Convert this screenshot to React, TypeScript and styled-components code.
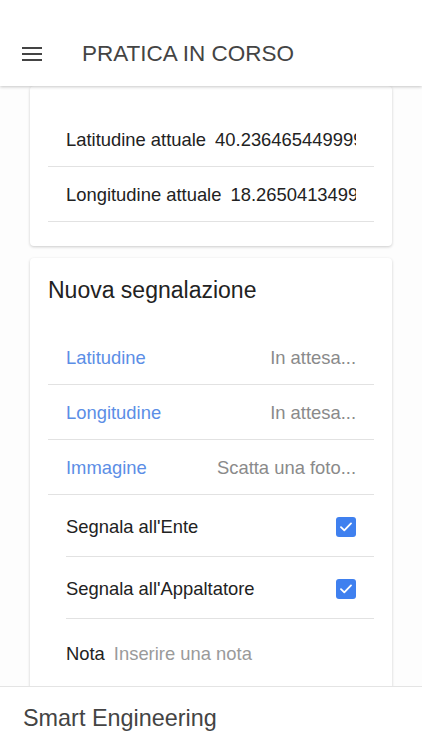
import styled, { createGlobalStyle } from "styled-components";

const GlobalStyle = createGlobalStyle`
  html, body {
    margin: 0;
    padding: 0;
    background: #fdfdfd;
  }
  * {
    box-sizing: border-box;
  }
  body {
    font-family: "Liberation Sans", Arial, Helvetica, sans-serif;
    -webkit-font-smoothing: antialiased;
  }
`;

// icona menu (hamburger)
const MenuIcon = () => (
  <svg width="20" height="16" viewBox="0 0 20 16" fill="none">
    <path d="M0 2h20M0 8h20M0 14h20" stroke="#444" strokeWidth="2" />
  </svg>
);

// checkbox spuntata stile iOS
const CheckIcon = () => (
  <svg width="12" height="10" viewBox="0 0 12 10" fill="none">
    <path d="M1 5.2L4.3 8.4L11 1.4" stroke="#fff" strokeWidth="1.8" strokeLinecap="round" strokeLinejoin="round" />
  </svg>
);

const App = () => {
  return (
    <Page>
      <GlobalStyle />
      <Header>
        <MenuButton aria-label="menu">
          <MenuIcon />
        </MenuButton>
        <HeaderTitle>PRATICA IN CORSO</HeaderTitle>
      </Header>

      <Content>
        <Card $top={26}>
          <Row>
            <Label>Latitudine attuale</Label>
            <Value>40.236465449999999</Value>
          </Row>
          <Row>
            <Label>Longitudine attuale</Label>
            <Value>18.265041349999999</Value>
          </Row>
        </Card>

        <Card $top={16}>
          <CardTitle>Nuova segnalazione</CardTitle>
          <Row>
            <Label $blue>Latitudine</Label>
            <Placeholder>In attesa...</Placeholder>
          </Row>
          <Row>
            <Label $blue>Longitudine</Label>
            <Placeholder>In attesa...</Placeholder>
          </Row>
          <Row>
            <Label $blue>Immagine</Label>
            <Placeholder>Scatta una foto...</Placeholder>
          </Row>
          <Row $inset $tall>
            <Label>Segnala all'Ente</Label>
            <Checkbox>
              <CheckIcon />
            </Checkbox>
          </Row>
          <Row $inset $tall>
            <Label>Segnala all'Appaltatore</Label>
            <Checkbox>
              <CheckIcon />
            </Checkbox>
          </Row>
          <Row $inset $tall $last>
            <Label>Nota</Label>
            <NoteInput>Inserire una nota</NoteInput>
          </Row>
        </Card>
      </Content>

      <Footer>
        <FooterTitle>Smart Engineering</FooterTitle>
      </Footer>
    </Page>
  );
};

const Page = styled.div`
  height: 750px;
  display: flex;
  flex-direction: column;
  overflow: hidden;
  background: #fdfdfd;
`;

const Header = styled.header`
  height: 86px;
  flex-shrink: 0;
  background: #fff;
  display: flex;
  align-items: center;
  padding: 22px 0 0 22px;
  box-shadow: 0 1px 3px rgba(0, 0, 0, 0.22);
  position: relative;
  z-index: 2;
`;

const MenuButton = styled.div`
  width: 20px;
  height: 16px;
  display: flex;
  margin-right: 40px;
`;

const HeaderTitle = styled.h1`
  margin: 0;
  font-size: 22.5px;
  font-weight: 400;
  color: #444;
`;

const Content = styled.main`
  flex: 1;
  overflow: hidden;
  padding: 0 30px;
  display: flex;
  flex-direction: column;
  gap: 12px;
`;

const Card = styled.section<{ $top: number }>`
  background: #fff;
  border-radius: 4px;
  padding: ${({ $top }) => $top}px 18px 24px;
  box-shadow: 0 1px 3px rgba(0, 0, 0, 0.2);
  flex-shrink: 0;
`;

const CardTitle = styled.h2`
  margin: 0 0 24px;
  line-height: 32px;
  font-size: 23px;
  font-weight: 400;
  color: #222;
`;

const Row = styled.div<{ $inset?: boolean; $tall?: boolean; $last?: boolean }>`
  height: ${({ $tall }) => ($tall ? 62 : 55)}px;
  display: flex;
  align-items: center;
  padding: ${({ $last }) => ($last ? "7px" : "2px")} 18px 0;
  margin-left: ${({ $inset }) => ($inset ? 18 : 0)}px;
  padding-left: ${({ $inset }) => ($inset ? 0 : 18)}px;
  border-bottom: ${({ $last }) => ($last ? "none" : "1px solid #e2e2e2")};
  font-size: 18.4px;
`;

const Label = styled.span<{ $blue?: boolean }>`
  color: ${({ $blue }) => ($blue ? "#5b8ee6" : "#222")};
  white-space: nowrap;
  margin-right: 9px;
`;

const Value = styled.span`
  flex: 1;
  min-width: 0;
  overflow: hidden;
  white-space: nowrap;
  color: #222;
`;

const Placeholder = styled.span`
  margin-left: auto;
  color: #8a8a8a;
  white-space: nowrap;
`;

const NoteInput = styled.span`
  color: #9a9a9a;
  white-space: nowrap;
`;

const Checkbox = styled.span`
  margin-left: auto;
  width: 20px;
  height: 20px;
  border-radius: 3px;
  background: #3f80ef;
  display: flex;
  align-items: center;
  justify-content: center;
`;

const Footer = styled.footer`
  height: 64px;
  flex-shrink: 0;
  background: #fff;
  border-top: 1px solid #e4e4e4;
  display: flex;
  align-items: center;
  padding-left: 23px;
  position: relative;
  z-index: 2;
`;

const FooterTitle = styled.span`
  font-size: 23.4px;
  color: #444;
`;

export default App;
